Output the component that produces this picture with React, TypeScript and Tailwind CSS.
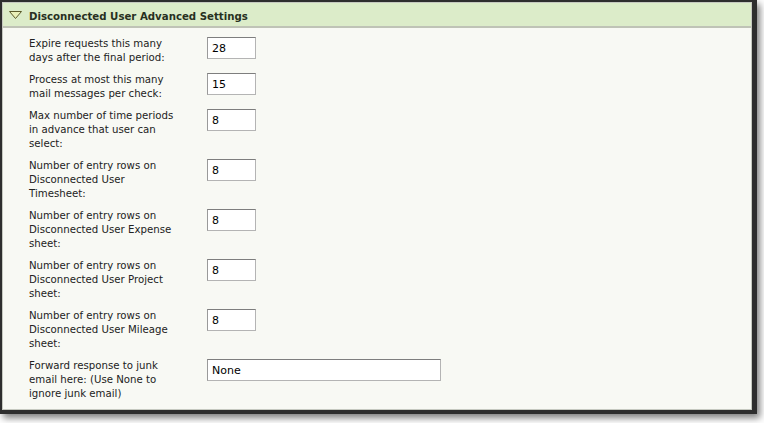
const rows: { label: string[]; value: string; wide?: boolean }[] = [
  { label: ['Expire requests this many', 'days after the final period:'], value: '28' },
  { label: ['Process at most this many', 'mail messages per check:'], value: '15' },
  { label: ['Max number of time periods', 'in advance that user can', 'select:'], value: '8' },
  { label: ['Number of entry rows on', 'Disconnected User', 'Timesheet:'], value: '8' },
  { label: ['Number of entry rows on', 'Disconnected User Expense', 'sheet:'], value: '8' },
  { label: ['Number of entry rows on', 'Disconnected User Project', 'sheet:'], value: '8' },
  { label: ['Number of entry rows on', 'Disconnected User Mileage', 'sheet:'], value: '8' },
  { label: ['Forward response to junk', 'email here: (Use None to', 'ignore junk email)'], value: 'None', wide: true },
];

const App = () => {
  return (
    <div className="w-[764px] h-[423px] bg-white" style={{ fontFamily: '"DejaVu Sans", Verdana, sans-serif' }}>
      <div className="w-[757px] h-[414px] bg-[#2e2e2e] pt-[2px] pl-[2px] pr-[5px] pb-[4px] shadow-[3px_4px_7px_rgba(0,0,0,0.5)]">
        <div className="h-full border border-[#c6c9c0] bg-[#f8f9f4] flex flex-col">
          {/* Header */}
          <div className="h-[25px] bg-[#dcecc9] border-b-2 border-[#bfc3b6] flex items-center pl-[6px] gap-[7px]">
            <svg width="13" height="8" viewBox="0 0 13 8">
              <polygon points="0.5,0.5 12.5,0.5 6.5,7.5" fill="#e9f0b8" stroke="#5a5a2a" strokeWidth="1" />
            </svg>
            <span className="pt-[5px] text-[10.2px] font-bold text-[#28301f]">Disconnected User Advanced Settings</span>
          </div>

          {/* Settings */}
          <div className="flex flex-col gap-2 pt-[9px] pl-[26px]">
            {rows.map((row, i) => (
              <div key={i} className="flex items-start">
                <div className="w-[178px] text-[10.2px] leading-[14px] text-[#222]">
                  {row.label.map((line, j) => (
                    <div key={j}>{line}</div>
                  ))}
                </div>
                <input
                  readOnly
                  value={row.value}
                  className={`${row.wide ? 'w-[234px]' : 'w-[49px]'} h-[22px] bg-white border border-[#b4b4b4] border-t-[#7e7e7e] border-l-[#9a9a9a] pl-[4px] text-[11px] text-black outline-none`}
                  style={{ fontFamily: '"DejaVu Sans", Verdana, sans-serif' }}
                />
              </div>
            ))}
          </div>
        </div>
      </div>
    </div>
  );
};

export default App;
